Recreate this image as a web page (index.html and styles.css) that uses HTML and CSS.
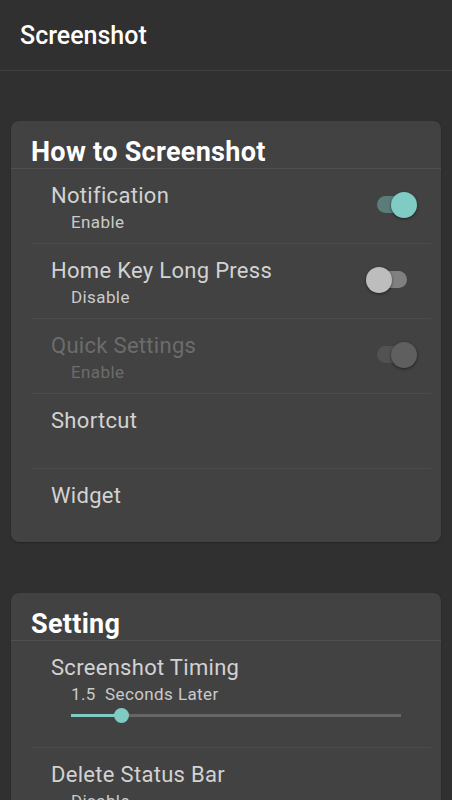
FILE: index.html
```html
<!DOCTYPE html>
<html lang="en">
<head>
  <meta charset="UTF-8">
  <meta name="viewport" content="width=device-width, initial-scale=1.0">
  <title>Screenshot</title>
  <link rel="stylesheet" href="styles.css">
</head>
<body>
  <header class="topbar">Screenshot</header>

  <main class="content">
    <section class="card">
      <h2 class="card-title">How to Screenshot</h2>

      <div class="row">
        <div class="row-text">
          <div class="row-title">Notification</div>
          <div class="row-sub">Enable</div>
        </div>
        <span class="toggle on"><span class="track"></span><span class="thumb"></span></span>
      </div>

      <div class="row">
        <div class="row-text">
          <div class="row-title">Home Key Long Press</div>
          <div class="row-sub">Disable</div>
        </div>
        <span class="toggle"><span class="track"></span><span class="thumb"></span></span>
      </div>

      <div class="row disabled">
        <div class="row-text">
          <div class="row-title">Quick Settings</div>
          <div class="row-sub">Enable</div>
        </div>
        <span class="toggle on off-state"><span class="track"></span><span class="thumb"></span></span>
      </div>

      <div class="row">
        <div class="row-text">
          <div class="row-title">Shortcut</div>
        </div>
      </div>

      <div class="row last">
        <div class="row-text">
          <div class="row-title">Widget</div>
        </div>
      </div>
    </section>

    <section class="card">
      <h2 class="card-title">Setting</h2>

      <div class="row slider-row">
        <div class="row-text">
          <div class="row-title">Screenshot Timing</div>
          <div class="row-sub">1.5&nbsp;&nbsp;Seconds Later</div>
          <div class="slider">
            <span class="slider-fill" style="width: 15%"></span>
            <span class="slider-thumb" style="left: 15%"></span>
          </div>
        </div>
      </div>

      <div class="row">
        <div class="row-text">
          <div class="row-title">Delete Status Bar</div>
          <div class="row-sub">Disable</div>
        </div>
      </div>
    </section>
  </main>
</body>
</html>
```

FILE: styles.css
```css
body {
  margin: 0;
  background: #303030;
  color: #d2d2d2;
  font-family: Roboto, 'Noto Sans', sans-serif;
  overflow: hidden;
}
.topbar {
  height: 50px;
  padding: 20px 0 0 20px;
  font-size: 25px;
  line-height: 32px;
  font-weight: 500;
  color: #fff;
  border-bottom: 1px solid #3e3e3e;
}
.content {
  padding: 50px 11px 0;
  display: flex;
  flex-direction: column;
  gap: 51px;
}
.card {
  background: #424242;
  border-radius: 8px;
  box-shadow: 0 1px 2px rgba(0, 0, 0, 0.25);
}
.card-title {
  margin: 0;
  padding: 15px 20px 0;
  height: 32px;
  font-size: 27px;
  line-height: 32px;
  font-weight: 700;
  letter-spacing: 0.3px;
  color: #fff;
  border-bottom: 1px solid #505050;
}
.row {
  margin: 0 10px 0 20px;
  padding: 14px 14px 0 20px;
  height: 60px;
  display: flex;
  align-items: flex-start;
  justify-content: space-between;
  border-bottom: 1px solid #4c4c4c;
}
.row.last {
  height: 59px;
  border-bottom: none;
}
.row-text {
  flex: 1;
}
.row-title {
  font-size: 22px;
  line-height: 26px;
  letter-spacing: 0.3px;
  color: #d2d2d2;
}
.row-sub {
  margin-top: 1px;
  padding-left: 20px;
  font-size: 17px;
  line-height: 24px;
  letter-spacing: 0.4px;
  color: #cacaca;
}
.disabled .row-title,
.disabled .row-sub {
  color: #6c6c6c;
}

/* switches */
.toggle {
  position: relative;
  width: 51px;
  height: 26px;
  margin-top: 9px;
}
.track {
  position: absolute;
  left: 11px;
  top: 4px;
  width: 30px;
  height: 17px;
  border-radius: 9px;
  background: #808080;
}
.thumb {
  position: absolute;
  left: 0;
  top: 0;
  width: 26px;
  height: 26px;
  border-radius: 50%;
  background: #bdbdbd;
  box-shadow: 0 1px 3px rgba(0, 0, 0, 0.5);
}
.toggle.on .track {
  background: #5b7c78;
}
.toggle.on .thumb {
  left: 25px;
  background: #80cbc4;
}
.toggle.off-state .track {
  background: #525252;
}
.toggle.off-state .thumb {
  background: #5f5f5f;
}

/* slider */
.slider-row {
  height: 92px;
}
.slider {
  position: relative;
  height: 20px;
  margin: 0 16px 0 20px;
}
.slider::before {
  content: '';
  position: absolute;
  left: 0;
  right: 0;
  top: 8px;
  height: 3px;
  background: #666;
}
.slider-fill {
  position: absolute;
  left: 0;
  top: 8px;
  height: 3px;
  background: #80cbc4;
}
.slider-thumb {
  position: absolute;
  top: 2px;
  width: 15px;
  height: 15px;
  margin-left: -7px;
  border-radius: 50%;
  background: #80cbc4;
}
```
